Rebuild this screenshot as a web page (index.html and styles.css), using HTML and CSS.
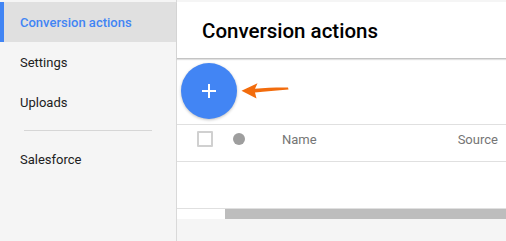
FILE: index.html
```html
<!DOCTYPE html>
<html>
<head>
<meta charset="utf-8">
<link rel="stylesheet" href="styles.css">
</head>
<body>
<div class="app">
  <nav class="sidebar">
    <div class="nav-item active">Conversion actions</div>
    <div class="nav-item">Settings</div>
    <div class="nav-item">Uploads</div>
    <div class="divider"></div>
    <div class="nav-item">Salesforce</div>
  </nav>
  <main class="main">
    <div class="panel">
      <header class="header"><h1 class="title">Conversion actions</h1></header>
      <div class="toolbar">
        <button class="fab" aria-label="Add">
          <svg width="16" height="16" viewBox="0 0 16 16"><path d="M8 1v14M1 8h14" stroke="#fff" stroke-width="2"/></svg>
        </button>
        <svg class="arrow" width="50" height="20" viewBox="0 0 50 20">
          <path d="M0.5 8.8 L16.5 1.2 L14 6.8 C24 6 36 5.4 47 5.6 L47.5 7.4 C36 8.3 24 9.4 14 10.6 L15.5 16.6 Z" fill="#f26c0d"/>
        </svg>
      </div>
      <div class="table-head">
        <span class="checkbox"></span>
        <span class="dot"></span>
        <span class="col-name">Name</span>
        <span class="col-source">Source</span>
      </div>
      <div class="table-body"></div>
    </div>
    <div class="scrollbar"><div class="thumb"></div></div>
  </main>
</div>
</body>
</html>
```
FILE: styles.css
```css
* { box-sizing: border-box; }
html, body { margin: 0; padding: 0; }
body {
  width: 506px;
  height: 241px;
  overflow: hidden;
  background: #f5f5f5;
  font-family: Roboto, "Liberation Sans", sans-serif;
}
.app {
  display: grid;
  grid-template-columns: 177px 1fr;
  height: 241px;
  padding-top: 2px;
}
.sidebar {
  border-right: 1px solid #d9d9d9;
  background: #f5f5f5;
  margin-top: -2px;
  padding-top: 2px;
}
.nav-item {
  height: 40px;
  display: flex;
  align-items: center;
  padding-left: 20px;
  font-size: 13px;
  color: #212121;
}
.nav-item.active {
  background: #e0e0e0;
  color: #4285f4;
  font-weight: 500;
  border-left: 4px solid #4285f4;
  padding-left: 16px;
}
.divider {
  height: 1px;
  background: #d6d6d6;
  margin: 8px 24px;
}
.main {
  display: flex;
  flex-direction: column;
  min-width: 0;
}
.panel {
  background: #fff;
  height: 206px;
  display: flex;
  flex-direction: column;
}
.header {
  height: 57px;
  display: flex;
  align-items: center;
  padding-left: 25px;
  border-bottom: 1px solid #c4c4c4;
  box-shadow: 0 1px 1px rgba(0,0,0,0.12);
  position: relative;
}
.title {
  margin: 0;
  font-size: 20.5px;
  font-weight: 500;
  color: #000;
  padding-top: 2px;
}
.toolbar {
  height: 65px;
  display: flex;
  align-items: center;
  padding-left: 4px;
  gap: 4px;
}
.fab {
  width: 56px;
  height: 56px;
  border-radius: 50%;
  border: none;
  background: #4285f4;
  display: flex;
  align-items: center;
  justify-content: center;
  padding: 0;
  box-shadow: 0 1px 3px rgba(0,0,0,0.25);
  margin-top: -1px;
}
.arrow { display: block; margin-top: 1px; }
.table-head {
  height: 38px;
  border-top: 1px solid #e0e0e0;
  border-bottom: 1px solid #e0e0e0;
  display: flex;
  align-items: center;
  padding-left: 20px;
  padding-bottom: 8px;
  font-size: 13px;
  color: #757575;
}
.checkbox {
  width: 16px;
  height: 16px;
  border: 2px solid #d0d0d0;
  border-radius: 1px;
}
.dot {
  width: 12px;
  height: 12px;
  border-radius: 50%;
  background: #9e9e9e;
  margin-left: 20px;
}
.col-name { margin-left: 37px; }
.col-source { margin-left: 141px; }
.table-body { flex: 1; }
.scrollbar {
  height: 11px;
  border-top: 1px solid #e0e0e0;
  background: #fff;
  padding-left: 48px;
}
.thumb {
  height: 10px;
  background: #bdbdbd;
}
```
